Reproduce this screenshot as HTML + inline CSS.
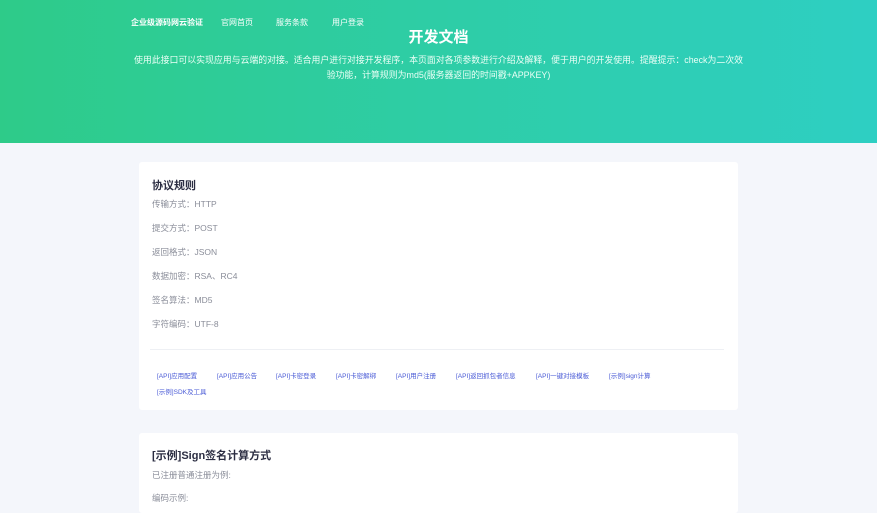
<!DOCTYPE html>
<html><head><meta charset="utf-8"><style>
*{margin:0;padding:0;box-sizing:border-box}
body{width:877px;height:497px;overflow:hidden;background:#f4f6fb;font-family:"Liberation Sans","Noto Sans CJK SC",sans-serif;}
.hd{position:absolute;left:0;top:0;width:877px;height:143px;background:linear-gradient(90deg,#2ecb89,#2ecfc3);}
.nav{position:absolute;top:17px;font-size:8px;color:#fff;}
.h1{position:absolute;top:26px;left:0;width:877px;text-align:center;color:#fff;font-size:15px;font-weight:bold;}
.desc{position:absolute;top:53px;left:0;width:877px;text-align:center;color:#eafff6;font-size:8.9px;line-height:15px;white-space:nowrap;}
.card{position:absolute;left:139px;width:599px;background:#fff;border-radius:3px;}
.t{position:absolute;left:13px;font-size:11px;font-weight:bold;color:#2b2d42;}
.r{position:absolute;left:13px;font-size:8.5px;color:#8a8d99;}
.line{position:absolute;left:11px;right:14px;top:187px;height:1px;background:#eef0f4;}
.lk{position:absolute;font-size:6.5px;color:#4a5bd6;white-space:nowrap;}
</style></head><body>
<div class="hd"></div>
<div class="nav" style="left:131px;font-weight:bold">企业级源码网云验证</div>
<div class="nav" style="left:221px">官网首页</div>
<div class="nav" style="left:276px">服务条款</div>
<div class="nav" style="left:332px">用户登录</div>
<div class="h1">开发文档</div>
<div class="desc">使用此接口可以实现应用与云端的对接。适合用户进行对接开发程序，本页面对各项参数进行介绍及解释，便于用户的开发使用。提醒提示：check为二次效<br>验功能，计算规则为md5(服务器返回的时间戳+APPKEY)</div>
<div class="card" style="top:162px;height:248px">
<div class="t" style="top:15px">协议规则</div>
<div class="r" style="top:36px">传输方式：HTTP</div>
<div class="r" style="top:60px">提交方式：POST</div>
<div class="r" style="top:84px">返回格式：JSON</div>
<div class="r" style="top:108px">数据加密：RSA、RC4</div>
<div class="r" style="top:132px">签名算法：MD5</div>
<div class="r" style="top:156px">字符编码：UTF-8</div>
<div class="line"></div>
<div class="lk" style="left:18px;top:208px">[API]应用配置</div>
<div class="lk" style="left:78px;top:208px">[API]应用公告</div>
<div class="lk" style="left:137px;top:208px">[API]卡密登录</div>
<div class="lk" style="left:197px;top:208px">[API]卡密解绑</div>
<div class="lk" style="left:257px;top:208px">[API]用户注册</div>
<div class="lk" style="left:317px;top:208px">[API]返回抓包者信息</div>
<div class="lk" style="left:397px;top:208px">[API]一键对接模板</div>
<div class="lk" style="left:470px;top:208px">[示例]sign计算</div>
<div class="lk" style="left:18px;top:224px">[示例]SDK及工具</div>
</div>
<div class="card" style="top:433px;height:80px">
<div class="t" style="top:14px">[示例]Sign签名计算方式</div>
<div class="r" style="top:36px">已注册普通注册为例:</div>
<div class="r" style="top:59px">编码示例:</div>
</div>
</body></html>
